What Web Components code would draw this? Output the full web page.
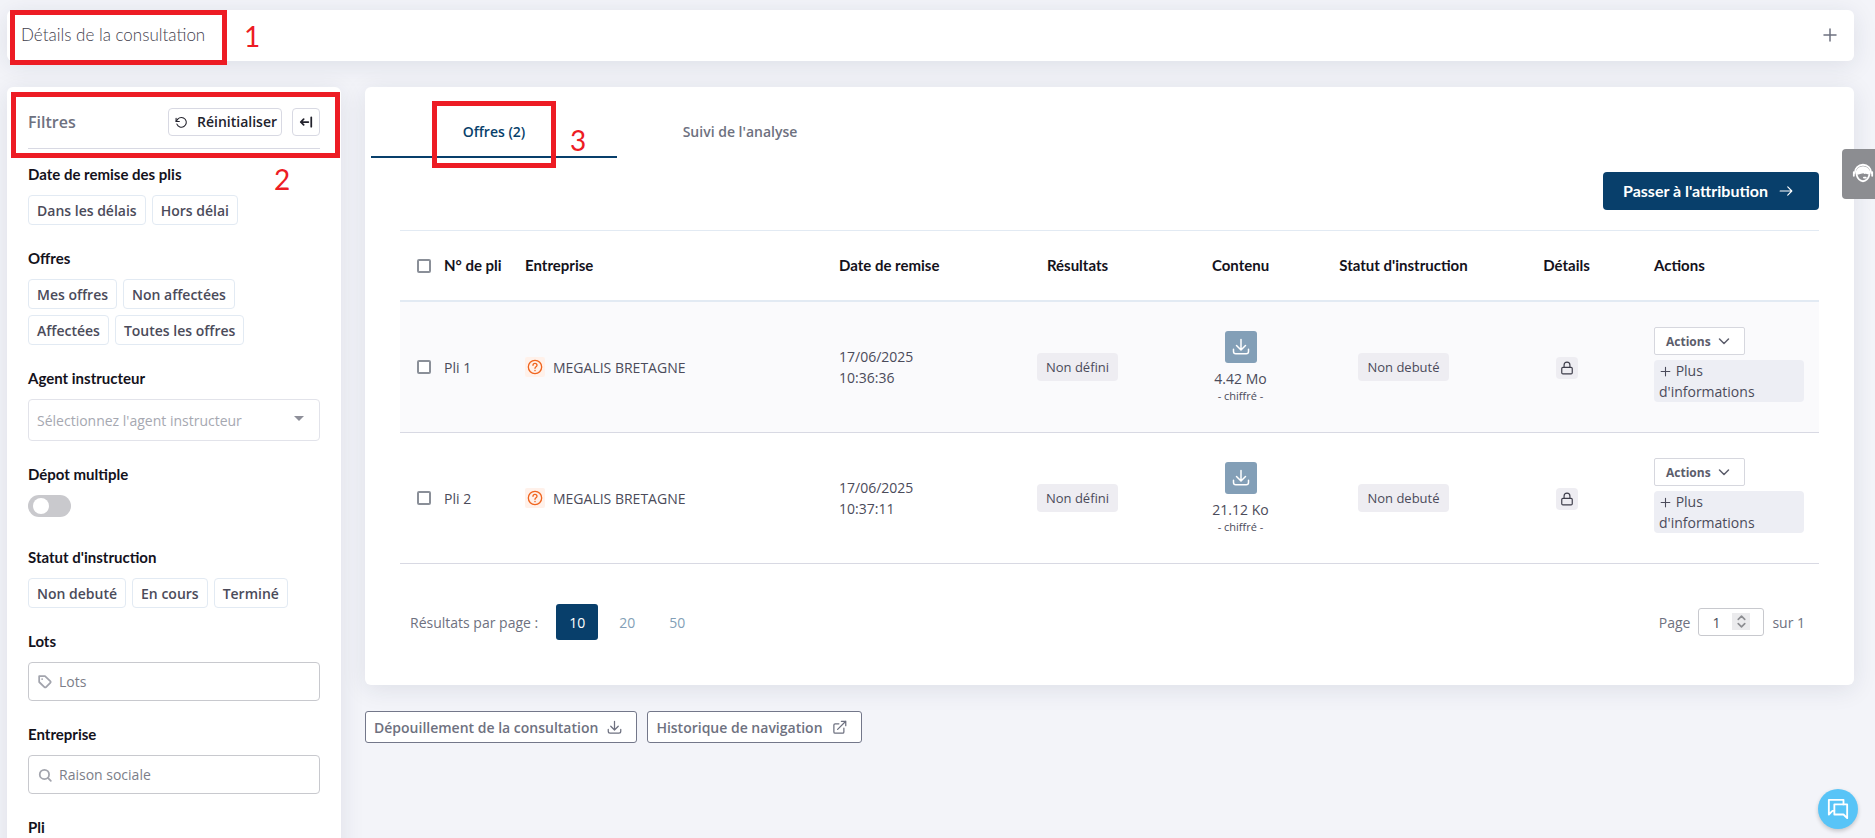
<!DOCTYPE html>
<html lang="fr">
<head>
<meta charset="utf-8">
<meta name="viewport" content="width=device-width, initial-scale=1">
<title>Offres de la consultation</title>
<style>
  :root {
    --ink: #4b4b5a;
    --muted: #6e7180;
    --title: #14121c;
    --primary: #083f6b;
    --line: #d8d9e3;
    --line-soft: #e2eaf3;
    --soft: #eeedf2;
    --red: #ed1c24;
    --heading: Lato, "Open Sans", sans-serif;
    --shadow: 0 4px 24px rgba(34, 41, 70, .1);
  }
  body {
    margin: 0;
    background: #f3f4f9;
    color: var(--ink);
    font: 14px/21px "Open Sans", sans-serif;
  }
</style>
</head>
<body>
<consultation-app></consultation-app>

<script>
const ICONS = {
  plus: '<path d="M12 4v16M4 12h16"/>',
  reset: '<path d="M2 4v6h6"/><path d="M3.5 15a9 9 0 1 0 1.6-9.200L2 10"/>',
  collapse: '<path d="M16 12H3M8 7l-5 5 5 5M21 4v16"/>',
  arrow: '<path d="M2 12h20M15 5l7 7-7 7"/>',
  download: '<path d="M12 2v13M6 10l6 6 6-6M2 15v3a3 3 0 0 0 3 3h14a3 3 0 0 0 3-3v-3"/>',
  lock: '<rect x="3" y="11" width="18" height="11" rx="2"/><path d="M7 11V7a5 5 0 0 1 10 0v4"/>',
  help: '<circle cx="12" cy="12" r="10"/><path d="M9 9.500a3 3 0 0 1 6 0c0 2-3 2.300-3 4.500M12 17v.5"/>',
  chevron: '<path d="M3 8l9 9 9-9"/>',
  external: '<path d="M19 13v6a2 2 0 0 1-2 2H5a2 2 0 0 1-2-2V8a2 2 0 0 1 2-2h6M15 2h7v7M9 15L22 2"/>',
  tag: '<path d="M21 13.400l-7.200 7.200a2 2 0 0 1-2.800 0L2 12V2h10l9 8.600a2 2 0 0 1 0 2.800zM7 7h.1"/>',
  search: '<circle cx="11" cy="11" r="8"/><path d="M22 22l-5-5"/>',
  spin: '<path d="M6 8l6-6 6 6M6 16l6 6 6-6"/>',
  chat: '<path d="M8 14H6l-4 4V2h16v5"/><path d="M8 7h14v15l-4-4H8z"/>',
  agent: '<path d="M3 12a9 9 0 0 1 18 0"/><path d="M5 13c0-10 14-10 14 0-2 0-3-2-5-1-2-2-5 1-9 1z" fill="currentColor"/><path d="M5 14c1 4 4 7 7 7s6-3 7-7M2 11v4M22 11v4M13 17h2"/>'
};
const icon = (name, size, stroke = 2) =>
  `<svg width="${size}" height="${size}" viewBox="0 0 24 24" fill="none" stroke="currentColor" stroke-width="${stroke}" stroke-linecap="round" stroke-linejoin="round" aria-hidden="true">${ICONS[name]}</svg>`;

const BASE = `
  *, *::before, *::after { box-sizing: border-box; }
  button, input, select { font: inherit; color: inherit; margin: 0; }
  button { cursor: pointer; }
  svg { display: block; flex: none; }
`;

function define(name, css, html) {
  customElements.define(name, class extends HTMLElement {
    constructor() {
      super();
      const root = this.attachShadow({ mode: "open" });
      root.innerHTML = `<style>${BASE}${css}</style>${typeof html === "function" ? html(this) : html}`;
    }
  });
}

/* White rounded surface */
define("ui-card", `
  :host { display: block; position: relative; background: #fff; border-radius: 6px; box-shadow: var(--shadow); }
`, `<slot></slot>`);

/* Red frame with an optional number beside it, laid over the interface */
define("red-frame", `
  :host { position: absolute; border: 5px solid var(--red); pointer-events: none; z-index: 2; }
`, ``);
define("red-number", `
  :host { position: absolute; color: var(--red); font: 28px/32px Lato, sans-serif; pointer-events: none; z-index: 2; }
`, `<slot></slot>`);

define("chip-button", `
  :host { display: block; }
  button { display: block; height: 30px; padding: 1px 8px 0; background: #fff; border: 1px solid var(--line-soft);
    border-radius: 4px; font-weight: 600; line-height: 20px; white-space: nowrap; }
`, `<button type="button"><slot></slot></button>`);

define("status-badge", `
  :host { display: inline-block; padding: 4px 9px; border-radius: 4px; background: var(--soft); font-size: 13px; line-height: 20px; vertical-align: middle; }
`, `<slot></slot>`);

define("details-bar", `
  :host { display: block; position: relative; }
  .bar { display: flex; align-items: center; justify-content: space-between; width: 100%; height: 51px; padding: 0 15px 2px 14px;
    background: none; border: 0; text-align: left; color: var(--muted); }
  .label { font: 300 17px/24px var(--heading); color: #3f3e4d; }
  red-frame { left: 3px; top: 0; width: 217px; height: 55px; }
  red-number { left: 237px; top: 10px; }
`, `
  <ui-card><button class="bar" type="button" aria-expanded="false"><span class="label">Détails de la consultation</span>${icon("plus", 18)}</button></ui-card>
  <red-frame></red-frame><red-number>1</red-number>
`);

define("filter-panel", `
  :host { display: block; position: relative; }
  ui-card { height: 100%; padding: 21px 21px 22px; }
  header { display: flex; align-items: center; gap: 10px; padding-bottom: 12px; border-bottom: 1px solid var(--line); margin-bottom: 14px; }
  h2 { flex: 1; margin: 0; font-size: 16px; line-height: 24px; font-weight: 600; color: var(--muted); }
  header button { display: flex; align-items: center; gap: 9px; height: 28px; padding: 0 4px 0 6px; background: #fff;
    border: 1px solid var(--line); border-radius: 4px; color: #22222c; font-weight: 600; line-height: 20px; }
  header button.fold { padding: 0 6px; }
  .groups { display: flex; flex-direction: column; gap: 22px; }
  .group { display: flex; flex-direction: column; gap: 10px; }
  .label { font: bold 15px/22px var(--heading); color: var(--title); }
  .chips { display: flex; flex-wrap: wrap; gap: 6px; }
  .control { position: relative; display: flex; align-items: center; color: #a2a4ad; }
  input[type=text] { width: 100%; height: 39px; padding: 0 8px 0 30px; border: 1px solid #c8c9ce; border-radius: 4px; background: #fff; color: var(--ink); }
  input::placeholder { color: #7c7e89; opacity: 1; }
  .control svg { position: absolute; left: 10px; }
  select { appearance: none; width: 100%; height: 42px; padding: 0 30px 0 8px; border: 1px solid #e2e3ea; border-radius: 4px; background: #fff; color: #a6a8b1; }
  .caret { position: absolute; right: 16px; top: 17px; border: 5px solid transparent; border-top-color: #8e8f99; border-bottom: 0; }
  .switch { height: 29px; }
  .switch input { appearance: none; display: block; width: 43px; height: 22px; border-radius: 11px; background: #c9c9cd; cursor: pointer; }
  .switch input::before { content: ""; display: block; width: 16px; height: 16px; margin: 3px 5px; border-radius: 50%; background: #fff; float: left; }
  .switch input:checked { background: var(--primary); }
  red-frame { left: 4px; top: 5px; width: 329px; height: 66px; }
  red-number { left: 267px; top: 76px; }
`, `
  <ui-card>
    <header><h2>Filtres</h2>
      <button type="button">${icon("reset", 13)}Réinitialiser</button>
      <button class="fold" type="button" aria-label="Replier">${icon("collapse", 14, 3)}</button></header>
    <div class="groups">
      <div class="group" role="group" aria-labelledby="l1"><span class="label" id="l1">Date de remise des plis</span>
        <div class="chips"><chip-button>Dans les délais</chip-button><chip-button>Hors délai</chip-button></div></div>
      <div class="group" role="group" aria-labelledby="l2"><span class="label" id="l2">Offres</span>
        <div class="chips"><chip-button>Mes offres</chip-button><chip-button>Non affectées</chip-button><chip-button>Affectées</chip-button><chip-button>Toutes les offres</chip-button></div></div>
      <div class="group"><label class="label" for="agent">Agent instructeur</label>
        <div class="control"><select id="agent"><option>Sélectionnez l'agent instructeur</option></select><span class="caret"></span></div></div>
      <div class="group"><label class="label" for="depot">Dépot multiple</label>
        <div class="switch"><input type="checkbox" id="depot" role="switch"></div></div>
      <div class="group" role="group" aria-labelledby="l3"><span class="label" id="l3">Statut d'instruction</span>
        <div class="chips"><chip-button>Non debuté</chip-button><chip-button>En cours</chip-button><chip-button>Terminé</chip-button></div></div>
      <div class="group"><label class="label" for="lots">Lots</label>
        <div class="control"><input type="text" id="lots" placeholder="Lots">${icon("tag", 14, 3)}</div></div>
      <div class="group"><label class="label" for="ent">Entreprise</label>
        <div class="control"><input type="text" id="ent" placeholder="Raison sociale">${icon("search", 14, 3)}</div></div>
      <div class="group"><label class="label" for="pli">Pli</label>
        <div class="control"><input type="text" id="pli"></div></div>
    </div>
  </ui-card>
  <red-frame></red-frame><red-number>2</red-number>
`);

define("tab-bar", `
  :host { display: block; position: relative; padding: 19px 6px 0; }
  [role=tablist] { display: flex; }
  button { width: 246px; height: 52px; padding: 0; border: 0; border-bottom: 2px solid transparent; background: none; font-weight: 600; color: var(--muted); }
  button[aria-selected=true] { color: var(--primary); border-color: var(--primary); }
  red-frame { left: 67px; top: 14px; width: 124px; height: 67px; }
  red-number { left: 205px; top: 37px; }
`, `
  <div role="tablist"><button role="tab" type="button" aria-selected="true">Offres (2)</button><button role="tab" type="button" aria-selected="false">Suivi de l'analyse</button></div>
  <red-frame></red-frame><red-number>3</red-number>
`);

const OFFERS = [
  { id: "Pli 1", date: "17/06/2025", time: "10:36:36", size: "4.42 Mo" },
  { id: "Pli 2", date: "17/06/2025", time: "10:37:11", size: "21.12 Ko" }
];
const offerRow = o => `
  <tr>
    <td class="check"><input type="checkbox" aria-label="${o.id}"></td>
    <td>${o.id}</td>
    <td><div class="company"><span class="help">${icon("help", 16)}</span>MEGALIS BRETAGNE</div></td>
    <td>${o.date}<br>${o.time}</td>
    <td class="mid"><status-badge>Non défini</status-badge></td>
    <td class="mid"><div class="content"><button type="button" class="dl" aria-label="Télécharger">${icon("download", 18)}</button><span>${o.size}</span><small>- chiffré -</small></div></td>
    <td class="mid"><status-badge>Non debuté</status-badge></td>
    <td class="mid"><span class="lock">${icon("lock", 14)}</span></td>
    <td class="actions"><button type="button" class="menu">Actions${icon("chevron", 12, 3)}</button>
      <button type="button" class="more">${icon("plus", 13)} Plus d'informations</button></td>
  </tr>`;

define("offers-table", `
  :host { display: block; }
  table { width: 100%; table-layout: fixed; border-collapse: separate; border-spacing: 0; }
  .c-check { width: 38px; } .c-id { width: 81px; } .c-cell { width: 163px; } .c-act { width: 171px; }
  th { height: 72px; padding: 0 6px 1px; border-top: 1px solid var(--line-soft); border-bottom: 2px solid var(--line-soft);
    font: bold 15px/20px var(--heading); color: var(--title); text-align: left; white-space: nowrap; }
  td { height: 131px; padding: 0 6px; border-bottom: 1px solid var(--line); text-align: left; vertical-align: middle; }
  tbody tr:nth-child(odd) { background: #fafafc; }
  .mid { text-align: center; }
  .check { padding: 0 0 0 17px; }
  input { appearance: none; display: block; width: 14px; height: 14px; border: 2px solid #8a8f98; border-radius: 2px; background: #fff; }
  input:checked { background: var(--primary); }
  .company { display: flex; align-items: center; gap: 8px; }
  .help { display: grid; place-items: center; width: 20px; height: 20px; border-radius: 2px; background: #fff1ea; color: #f0641e; }
  .content { display: flex; flex-direction: column; align-items: center; line-height: 20px; }
  .dl { display: grid; place-items: center; width: 32px; height: 32px; margin-bottom: 6px; padding: 0; border: 0; border-radius: 3px; background: #839fb7; color: #fff; }
  small { font-size: 11px; line-height: 14px; }
  .lock { display: inline-grid; place-items: center; width: 22px; height: 22px; border-radius: 4px; background: var(--soft); vertical-align: middle; color: #3d3d4a; }
  td.actions { padding-bottom: 5px; }
  .menu { display: flex; align-items: center; gap: 7px; width: 91px; height: 28px; margin-bottom: 5px; padding: 0 0 0 11px; border: 1px solid #d6d7de; border-radius: 2px;
    background: #fff; font-size: 12px; font-weight: 700; color: #5c5d6b; }
  .more { display: block; width: 150px; padding: 0 5px; border: 0; border-radius: 4px; background: #edeef4; text-align: left; }
  .more svg { display: inline-block; vertical-align: -2px; }
`, `
  <table>
    <colgroup><col class="c-check"><col class="c-id"><col><col class="c-cell"><col class="c-cell"><col class="c-cell"><col class="c-cell"><col class="c-cell"><col class="c-act"></colgroup>
    <thead><tr>
      <th class="check"><input type="checkbox" aria-label="Tout sélectionner"></th>
      <th>N° de pli</th><th>Entreprise</th><th>Date de remise</th>
      <th class="mid">Résultats</th><th class="mid">Contenu</th><th class="mid">Statut d'instruction</th><th class="mid">Détails</th><th>Actions</th>
    </tr></thead>
    <tbody>${OFFERS.map(offerRow).join("")}</tbody>
  </table>
`);

define("page-nav", `
  :host { display: flex; align-items: center; justify-content: space-between; padding: 0 14px 0 10px; color: var(--muted); }
  .sizes, .pages { display: flex; align-items: center; }
  .sizes > span { margin-right: 18px; }
  .sizes button { width: 42px; height: 36px; margin-right: 8px; padding: 0; border: 0; border-radius: 3px; background: none; color: #839fb7; }
  .sizes button[aria-current] { background: var(--primary); color: #fff; }
  .pages { gap: 8px; }
  .field { position: relative; }
  input { appearance: textfield; display: block; width: 66px; height: 28px; padding: 0 32px 0 13px; border: 1px solid #c8c9ce; border-radius: 3px; background: #fff; color: var(--ink); }
  input::-webkit-inner-spin-button { appearance: none; }
  .spin { position: absolute; right: 14px; top: 5px; display: grid; place-items: center; width: 18px; height: 17px; background: #ebebed; color: #8c8d91; pointer-events: none; }
`, `
  <div class="sizes"><span>Résultats par page :</span><button type="button" aria-current="true">10</button><button type="button">20</button><button type="button">50</button></div>
  <div class="pages"><label for="page">Page</label><div class="field"><input id="page" type="number" value="1" min="1" max="9"><span class="spin">${icon("spin", 13, 3)}</span></div><span>sur 1</span></div>
`);

define("offers-panel", `
  :host { display: block; }
  .body { padding: 14px 35px 45px; }
  .top { display: flex; justify-content: flex-end; margin-bottom: 20px; }
  .go { display: flex; align-items: center; gap: 11px; height: 38px; padding: 0 26px 0 20px; border: 0; border-radius: 4px; background: var(--primary); color: #fff; font: bold 16px/24px var(--heading); }
  page-nav { margin-top: 40px; }
`, `
  <ui-card>
    <tab-bar></tab-bar>
    <div class="body">
      <div class="top"><button class="go" type="button">Passer à l'attribution${icon("arrow", 14)}</button></div>
      <offers-table></offers-table>
      <page-nav></page-nav>
    </div>
  </ui-card>
`);

define("outline-button", `
  :host { display: block; }
  button { display: flex; align-items: center; gap: 9px; height: 32px; padding: 0 14px 0 8px; border: 1px solid #73778a; border-radius: 3px; background: #fff; color: var(--muted); font-weight: 600; }
`, el => `<button type="button"><slot></slot>${icon(el.getAttribute("icon"), 15)}</button>`);

define("support-tab", `
  :host { position: fixed; right: 0; top: 149px; z-index: 3; }
  button { display: flex; align-items: center; justify-content: flex-end; width: 33px; height: 50px; padding: 0 1px 2px 0; border: 0; border-radius: 4px 0 0 4px; background: #8c8d91; color: #fff; }
`, `<button type="button" aria-label="Assistance">${icon("agent", 22)}</button>`);

define("chat-bubble", `
  :host { position: fixed; right: 17px; bottom: 9px; z-index: 3; }
  button { display: grid; place-items: center; width: 40px; height: 40px; padding: 0; border: 0; border-radius: 50%; background: #58c4f7; color: #fff; box-shadow: 0 2px 4px rgba(0, 0, 0, .2); }
`, `<button type="button" aria-label="Discussion">${icon("chat", 22)}</button>`);

define("consultation-app", `
  :host { display: block; height: 100vh; overflow: auto; scrollbar-width: none; padding: 10px 21px 0 7px; }
  :host, main { box-sizing: border-box; }
  main { display: grid; grid-template-columns: 334px minmax(0, 1fr); column-gap: 24px; margin-top: 26px; }
  .links { display: flex; gap: 10px; margin-top: 26px; }
`, `
  <details-bar></details-bar>
  <main>
    <filter-panel></filter-panel>
    <div>
      <offers-panel></offers-panel>
      <div class="links"><outline-button icon="download">Dépouillement de la consultation</outline-button><outline-button icon="external">Historique de navigation</outline-button></div>
    </div>
  </main>
  <support-tab></support-tab>
  <chat-bubble></chat-bubble>
`);
</script>
</body>
</html>
